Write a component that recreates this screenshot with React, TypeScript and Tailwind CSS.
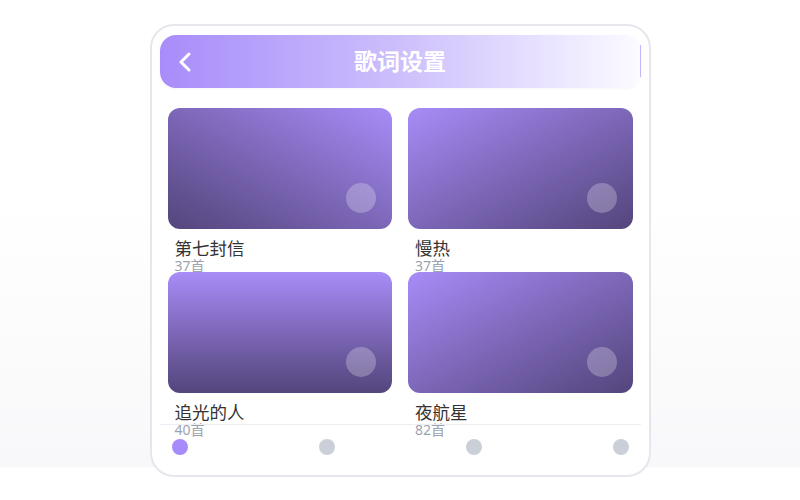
const albums = [
  { name: '第七封信', count: '37首', bg: 'bg-linear-to-tr from-[#54457c] to-[#a88cf8]' },
  { name: '慢热', count: '37首', bg: 'bg-linear-to-br from-[#a88cf8] to-[#54457c]' },
  { name: '追光的人', count: '40首', bg: 'bg-linear-to-b from-[#a88cf8] to-[#54457c]' },
  { name: '夜航星', count: '82首', bg: 'bg-linear-to-br from-[#a88cf8] to-[#54457c]' },
];

function AlbumCard({ name, count, bg }: { name: string; count: string; bg: string }) {
  return (
    <div className="h-[148px]">
      <div className={`relative h-[121px] rounded-xl ${bg}`}>
        <div className="absolute right-4 bottom-4 h-[30px] w-[30px] rounded-full bg-white/25" />
      </div>
      <div className="mt-[10px] px-[7px]">
        <p className="text-[17.5px] leading-[19px] text-[#333]">{name}</p>
        <p className="text-[14px] leading-[16px] text-[#9ca3af]">{count}</p>
      </div>
    </div>
  );
}

export default function App() {
  return (
    <div
      className="flex h-[500px] justify-center bg-[linear-gradient(to_bottom,#ffffff_0px,#ffffff_200px,#f8f8fa_467px,#ffffff_468px)] pt-6"
      style={{ fontFamily: '"Noto Sans", "Noto Sans CJK SC", sans-serif' }}
    >
      <div className="relative h-[453px] w-[501px] rounded-[24px] border-2 border-[#e6e6ec] bg-white px-2 pt-[9px]">
        <header className="relative flex h-[53px] items-center justify-center rounded-2xl bg-linear-to-r from-[#a88cfa] via-[#cdbffc] to-[#fcfbff] shadow-[0_1px_3px_rgba(120,100,200,0.08)]">
          <svg className="absolute left-[18px] top-[17px]" width="14" height="20" viewBox="0 0 14 20" fill="none">
            <polyline points="11,2 3,10 11,18" stroke="white" strokeWidth="3" strokeLinecap="round" strokeLinejoin="round" />
          </svg>
          <h1 className="text-[23px] font-bold text-white">歌词设置</h1>
          <div className="absolute right-0 top-[10px] h-[32px] w-px bg-[#c4b5fd]" />
        </header>

        <div className="mt-5 grid grid-cols-2 gap-4 px-2">
          {albums.map((a) => (
            <AlbumCard key={a.name} {...a} />
          ))}
        </div>

        <nav className="absolute left-2 right-2 top-[398px] flex h-[44px] items-center justify-between border-t border-[#eceef2] px-3">
          <span className="h-4 w-4 rounded-full bg-[#a78bfa]" />
          <span className="h-4 w-4 rounded-full bg-[#cbd0d8]" />
          <span className="h-4 w-4 rounded-full bg-[#cbd0d8]" />
          <span className="h-4 w-4 rounded-full bg-[#cbd0d8]" />
        </nav>
      </div>
    </div>
  );
}
